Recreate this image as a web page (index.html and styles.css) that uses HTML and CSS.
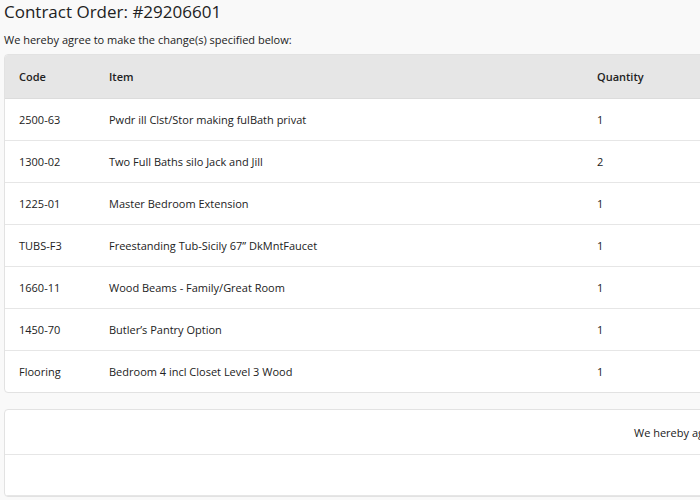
FILE: index.html
```html
<!DOCTYPE html>
<html>
<head>
<meta charset="utf-8">
<link rel="stylesheet" href="styles.css">
</head>
<body>
<div class="page">
  <h1 class="title">Contract Order: #29206601</h1>
  <p class="intro">We hereby agree to make the change(s) specified below:</p>
  <div class="card">
    <table class="items">
      <thead>
        <tr><th class="c-code">Code</th><th class="c-item">Item</th><th class="c-qty">Quantity</th></tr>
      </thead>
      <tbody>
        <tr><td>2500-63</td><td>Pwdr ill Clst/Stor making fulBath privat</td><td>1</td></tr>
        <tr><td>1300-02</td><td>Two Full Baths silo Jack and Jill</td><td>2</td></tr>
        <tr><td>1225-01</td><td>Master Bedroom Extension</td><td>1</td></tr>
        <tr><td>TUBS-F3</td><td>Freestanding Tub-Sicily 67” DkMntFaucet</td><td>1</td></tr>
        <tr><td>1660-11</td><td>Wood Beams - Family/Great Room</td><td>1</td></tr>
        <tr><td>1450-70</td><td>Butler’s Pantry Option</td><td>1</td></tr>
        <tr><td>Flooring</td><td>Bedroom 4 incl Closet Level 3 Wood</td><td>1</td></tr>
      </tbody>
    </table>
  </div>
  <div class="card second">
    <div class="srow first"><span class="agree">We hereby agree to make the change(s) specified above</span></div>
    <div class="srow"></div>
  </div>
</div>
</body>
</html>
```
FILE: styles.css
```css
html, body {
  margin: 0;
  padding: 0;
  background: #f9f9f9;
  overflow: hidden;
}
body {
  font-family: "Open Sans", "Liberation Sans", sans-serif;
  color: #222;
}
.page {
  padding: 0 0 0 4px;
  width: 760px;
}
.title {
  font-size: 17px;
  font-weight: 400;
  margin: 0;
  padding-top: 0;
  line-height: 23px;
}
.intro {
  font-size: 11px;
  margin: 0;
  padding-top: 7px;
  line-height: 20px;
  height: 24px;
}
.card {
  background: #fff;
  border: 1px solid #e2e2e2;
  border-radius: 4px;
  overflow: hidden;
}
.items {
  width: 100%;
  border-collapse: collapse;
  font-size: 11px;
}
.items th {
  background: #e6e6e6;
  font-weight: 600;
  text-align: left;
  height: 43px;
  padding: 0 0 0 14px;
  border-bottom: 1px solid #dcdcdc;
}
.items td {
  height: 41px;
  padding: 0 0 0 14px;
  border-bottom: 1px solid #e6e6e6;
}
.items tr:last-child td {
  border-bottom: none;
}
.c-code { width: 76px; }
.c-item { width: 474px; }
.second {
  margin-top: 16px;
}
.srow {
  height: 40px;
  border-bottom: 1px solid #e6e6e6;
  font-size: 11px;
  display: flex;
  align-items: center;
}
.srow.first {
  height: 44px;
  padding-left: 629px;
  white-space: nowrap;
}
```
